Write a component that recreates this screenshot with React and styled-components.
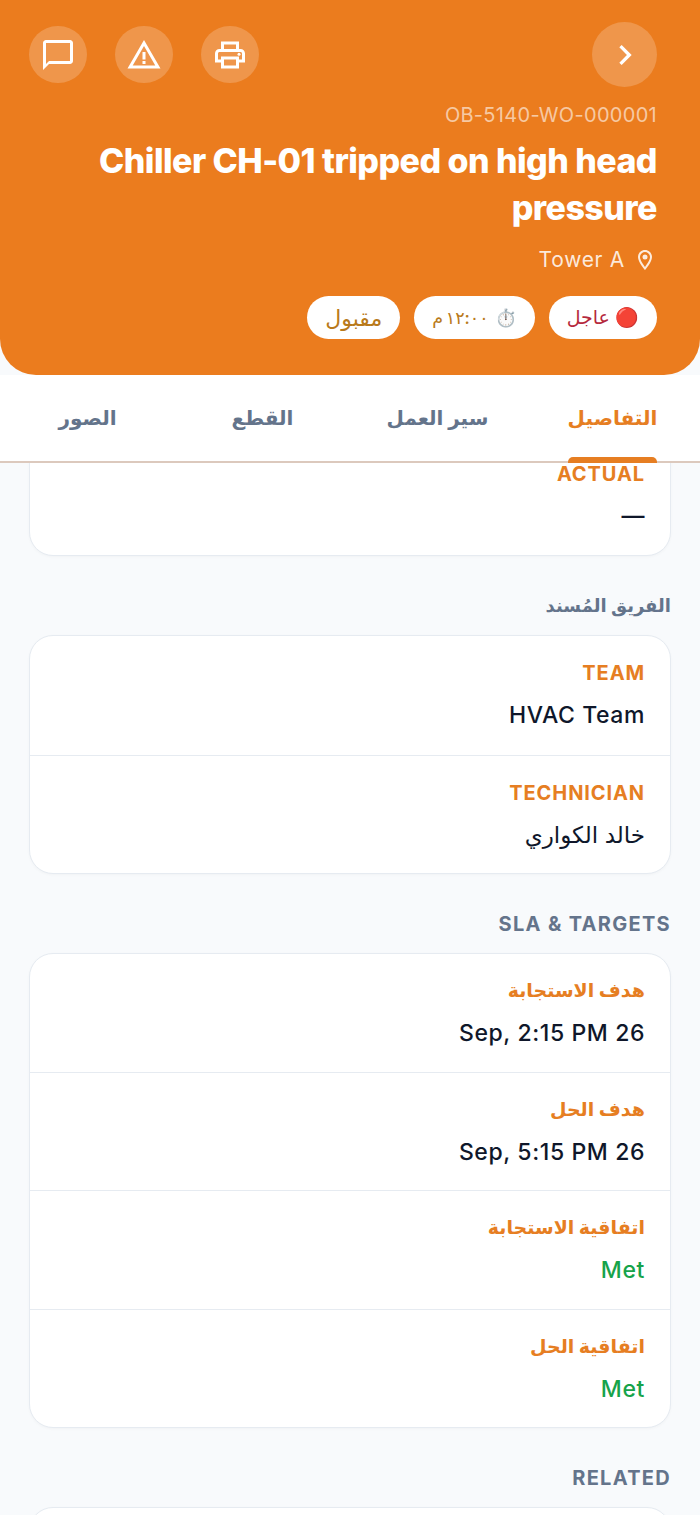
import React from 'react';
import styled, { createGlobalStyle } from 'styled-components';
import { MdChatBubbleOutline, MdWarningAmber, MdOutlinePrint, MdChevronRight, MdOutlineLocationOn } from 'react-icons/md';

const GlobalStyle = createGlobalStyle`
    html, body {
        margin: 0;
        padding: 0;
        background: #f8fafc;
    }
    * {
        box-sizing: border-box;
    }
`;

const Page = styled.div`
    width: 700px;
    height: 1515px;
    overflow: hidden;
    display: flex;
    flex-direction: column;
    background: #f8fafc;
    font-family: Inter, "DejaVu Sans", sans-serif;
`;

const Header = styled.header`
    height: 375px;
    flex: none;
    background: #eb7c1e;
    border-radius: 0 0 36px 36px;
    padding: 22px 43px 0 29px;
    display: flex;
    flex-direction: column;
    align-items: flex-end;
    color: #fff;
`;

const TopBar = styled.div`
    width: 100%;
    display: flex;
    justify-content: space-between;
    align-items: center;
`;

const ActionGroup = styled.div`
    display: flex;
    gap: 28.5px;
`;

const RoundButton = styled.button`
    width: ${p => p.$size}px;
    height: ${p => p.$size}px;
    border: none;
    padding: 0;
    border-radius: 50%;
    background: rgba(255, 255, 255, 0.2);
    color: #fff;
    display: flex;
    align-items: center;
    justify-content: center;
`;

const Code = styled.div`
    margin-top: 16px;
    font-size: 20px;
    line-height: 24px;
    letter-spacing: 0.3px;
    color: rgba(255, 255, 255, 0.6);
`;

const Title = styled.h1`
    margin: 10px 0 0;
    width: 580px;
    text-align: right;
    font-size: 34px;
    line-height: 47px;
    font-weight: 800;
    letter-spacing: -0.55px;
    color: #fff;
`;

const Location = styled.div`
    margin-top: 14px;
    display: flex;
    align-items: center;
    gap: 8px;
    font-size: 21px;
    line-height: 30px;
    letter-spacing: 0.7px;
    color: rgba(255, 255, 255, 0.85);
`;

const Badges = styled.div`
    direction: rtl;
    margin-top: 21px;
    display: flex;
    gap: 14px;
`;

const Badge = styled.span`
    height: 43px;
    padding: 0 18px;
    border-radius: 22px;
    background: #fff;
    color: ${p => p.$color};
    font-size: ${p => p.$size}px;
    font-weight: 500;
    display: flex;
    align-items: center;
    gap: 6px;
`;

const BadgeDigits = styled.span`
    letter-spacing: -3px;
    word-spacing: -2px;
`;

const Tabs = styled.nav`
    direction: rtl;
    height: 88px;
    flex: none;
    background: #fff;
    border-bottom: 2px solid #dcc9bd;
    display: flex;
    position: relative;
    z-index: 2;
`;

const Tab = styled.div`
    flex: 1;
    display: flex;
    justify-content: center;
`;

const TabLabel = styled.span`
    position: relative;
    padding-top: 27px;
    font-size: 20px;
    line-height: 32px;
    font-weight: 700;
    color: ${p => (p.$active ? '#e67e22' : '#64748b')};

    ${p => p.$active && `
        &::after {
            content: '';
            position: absolute;
            left: 0;
            right: 0;
            top: 82px;
            height: 6px;
            background: #e67e22;
            border-radius: 5px 5px 0 0;
        }
    `}
`;

const Content = styled.main`
    flex: 1;
    min-height: 0;
    overflow: hidden;
    padding: 0 29px;
    direction: rtl;
`;

const Card = styled.section`
    background: #fff;
    border: 1px solid #e6ebf1;
    border-radius: 24px;
    box-shadow: 0 1px 3px rgba(15, 23, 42, 0.03);
    overflow: hidden;
`;

/* the list is scrolled, its first card runs up under the tabs */
const ScrolledCard = styled(Card)`
    margin-top: -27px;
`;

const Row = styled.div`
    height: 118.25px;
    padding: 23px 25px 0;
    & + & {
        border-top: 1px solid #e6ebf1;
    }
`;

const Label = styled.div`
    font-size: ${p => (p.$ar ? 19 : 20)}px;
    line-height: 28px;
    font-weight: 700;
    letter-spacing: ${p => (p.$ar ? 0 : 0.9)}px;
    color: #e67e22;
`;

const Value = styled.div`
    margin-top: 14px;
    font-size: 23px;
    line-height: 28px;
    font-weight: ${p => (p.$ar ? 400 : 550)};
    letter-spacing: ${p => (p.$ar ? 0 : 0.6)}px;
    color: ${p => p.$color || '#0f172a'};
`;

const SectionTitle = styled.h2`
    margin: 36px 0 15px;
    height: 28px;
    font-size: ${p => (p.$ar ? 18 : 20)}px;
    line-height: 28px;
    font-weight: 700;
    letter-spacing: ${p => (p.$ar ? 0 : 1.3)}px;
    color: #64748b;
`;

const App = () => {
    return (
        <Page>
            <GlobalStyle />
            <Header>
                <TopBar>
                    <ActionGroup>
                        <RoundButton $size={57.5}><MdChatBubbleOutline size={36} /></RoundButton>
                        <RoundButton $size={57.5}><MdWarningAmber size={36} /></RoundButton>
                        <RoundButton $size={57.5}><MdOutlinePrint size={36} /></RoundButton>
                    </ActionGroup>
                    <RoundButton $size={65}><MdChevronRight size={40} /></RoundButton>
                </TopBar>
                <Code>OB-5140-WO-000001</Code>
                <Title>Chiller CH-01 tripped on high head pressure</Title>
                <Location>
                    <span>Tower A</span>
                    <MdOutlineLocationOn size={24} />
                </Location>
                <Badges>
                    <Badge $color="#b5283c" $size={19}>🔴 عاجل</Badge>
                    <Badge $color="#b97a1a" $size={17.5}>⏱️ <BadgeDigits>١٢:٠٠ م</BadgeDigits></Badge>
                    <Badge $color="#b97a1a" $size={22}>مقبول</Badge>
                </Badges>
            </Header>
            <Tabs>
                <Tab><TabLabel $active>التفاصيل</TabLabel></Tab>
                <Tab><TabLabel>سير العمل</TabLabel></Tab>
                <Tab><TabLabel>القطع</TabLabel></Tab>
                <Tab><TabLabel>الصور</TabLabel></Tab>
            </Tabs>
            <Content>
                <ScrolledCard>
                    <Row>
                        <Label>ACTUAL</Label>
                        <Value>—</Value>
                    </Row>
                </ScrolledCard>
                <SectionTitle $ar>الفريق المُسند</SectionTitle>
                <Card>
                    <Row>
                        <Label>TEAM</Label>
                        <Value>HVAC Team</Value>
                    </Row>
                    <Row>
                        <Label>TECHNICIAN</Label>
                        <Value $ar>خالد الكواري</Value>
                    </Row>
                </Card>
                <SectionTitle>SLA &amp; TARGETS</SectionTitle>
                <Card>
                    <Row>
                        <Label $ar>هدف الاستجابة</Label>
                        <Value>26 Sep, 2:15 PM</Value>
                    </Row>
                    <Row>
                        <Label $ar>هدف الحل</Label>
                        <Value>26 Sep, 5:15 PM</Value>
                    </Row>
                    <Row>
                        <Label $ar>اتفاقية الاستجابة</Label>
                        <Value $color="#16a34a">Met</Value>
                    </Row>
                    <Row>
                        <Label $ar>اتفاقية الحل</Label>
                        <Value $color="#16a34a">Met</Value>
                    </Row>
                </Card>
                <SectionTitle>RELATED</SectionTitle>
                <Card>
                    <Row />
                </Card>
            </Content>
        </Page>
    );
};

export default App;
